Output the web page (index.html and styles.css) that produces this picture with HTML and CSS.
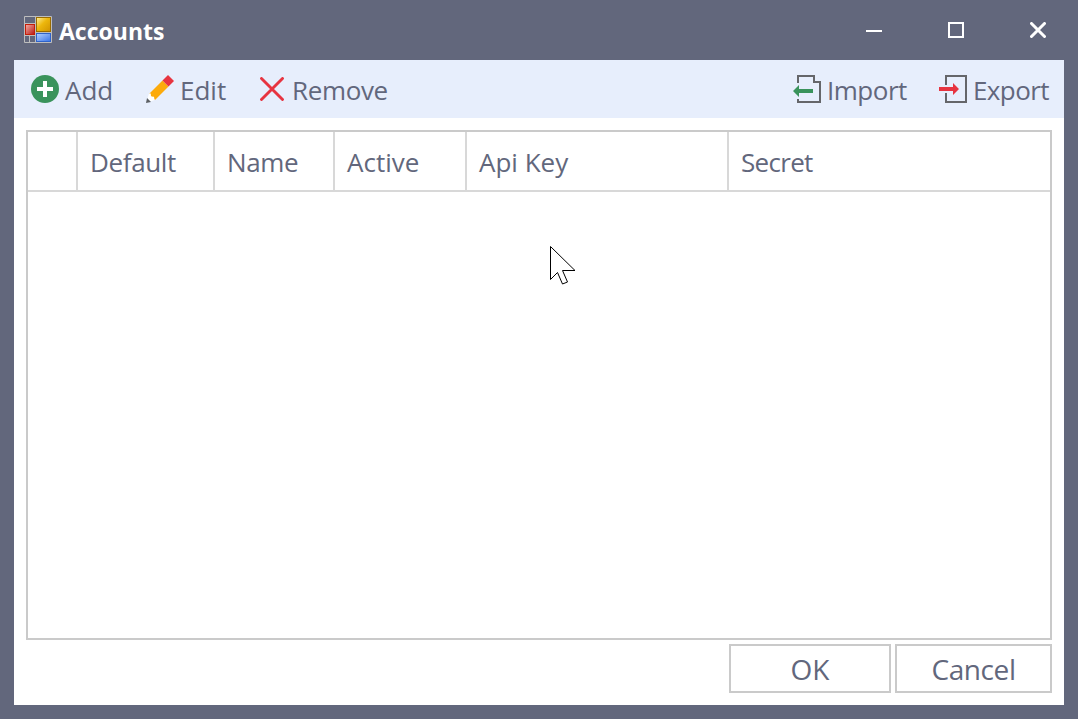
FILE: index.html
```
<!DOCTYPE html>
<html lang="en">
<head>
<meta charset="utf-8">
<title>Accounts</title>
<link rel="stylesheet" href="styles.css">
</head>
<body>
<div class="window">
  <header class="titlebar">
    <svg class="app-icon" width="28" height="27" viewBox="0 0 28 27">
      <defs>
        <linearGradient id="gold" x1="0" y1="0" x2="1" y2="1"><stop offset="0" stop-color="#fdf0a0"/><stop offset=".45" stop-color="#edb70c"/><stop offset="1" stop-color="#cf9200"/></linearGradient>
        <linearGradient id="red" x1="0" y1="0" x2="1" y2="1"><stop offset="0" stop-color="#f4b0a8"/><stop offset="1" stop-color="#b81510"/></linearGradient>
        <linearGradient id="blue" x1="0" y1="0" x2="1" y2="1"><stop offset="0" stop-color="#b4d0ff"/><stop offset="1" stop-color="#3974e8"/></linearGradient>
      </defs>
      <path d="M.5.5h27v26H.5zM11.5.5v26M.5 7.500h11M.5 19.500h11M5.500 19.500v7M11.500 16.500h16" fill="none" stroke="#bdbdbd"/>
      <rect x="12.500" y="1.500" width="14" height="14" fill="url(#gold)" stroke="#9a6c00"/>
      <rect x="1.500" y="8.500" width="9" height="10" fill="url(#red)" stroke="#c41d08"/>
      <rect x="12.500" y="17.500" width="14" height="8" fill="url(#blue)" stroke="#2f63c9"/>
    </svg>
    <h1 class="title">Accounts</h1>
    <div class="controls">
      <svg width="16" height="16"><path d="M0 9h16" stroke="#fff" stroke-width="2"/></svg>
      <svg width="16" height="16"><path d="M1 1h14v14H1z" fill="none" stroke="#fff" stroke-width="2"/></svg>
      <svg width="16" height="16"><path d="M1.500 1.500l13 13M14.500 1.500l-13 13" stroke="#fff" stroke-width="3" stroke-linecap="round"/></svg>
    </div>
  </header>
  <main class="content">
    <nav class="toolbar">
      <div class="tool add">
        <svg width="28" height="28"><circle cx="14" cy="14" r="14" fill="#3a935c"/><path d="M6 14h16M14 6v16" stroke="#fff" stroke-width="4"/></svg>
        <span>Add</span>
      </div>
      <div class="tool edit">
        <svg width="28" height="28"><path d="M16.500 5.500l6 6L9 25l-6-6z" fill="#fcaa0b"/><path d="M16.500 5.500L22 0l6 6-5.500 5.500z" fill="#e73440"/><path d="M3 18.500l1.800 0 .2 3 3 .2.500 3.300-4 1.500-3-3z" fill="#fff"/><path d="M1 23l4 4-5 1z" fill="#5d6064"/></svg>
        <span>Edit</span>
      </div>
      <div class="tool remove">
        <svg width="24" height="24"><path d="M1.500 1.500l21 21M22.500 1.500l-21 21" stroke="#e73440" stroke-width="2.900" stroke-linecap="round"/></svg>
        <span>Remove</span>
      </div>
      <div class="tool import">
        <svg width="28" height="28"><path d="M5 8V1h16v6h6v20H5v-3" fill="none" stroke="#65666a" stroke-width="2"/><path d="M0 16l6-6v4h14v4H6v4z" fill="#3a935c"/></svg>
        <span>Import</span>
      </div>
      <div class="tool export">
        <svg width="28" height="28"><path d="M7 10V1h20v26H7v-9" fill="none" stroke="#65666a" stroke-width="2"/><path d="M0 12h14V8l6 6-6 6v-4H0z" fill="#e73440"/></svg>
        <span>Export</span>
      </div>
    </nav>
    <section class="grid">
      <div class="grid-head">
        <div class="cell"></div>
        <div class="cell default"><span>Default</span></div>
        <div class="cell name"><span>Name</span></div>
        <div class="cell active"><span>Active</span></div>
        <div class="cell key"><span>Api Key</span></div>
        <div class="cell secret"><span>Secret</span></div>
      </div>
    </section>
    <footer class="actions">
      <button class="button ok"><span>OK</span></button>
      <button class="button cancel"><span>Cancel</span></button>
    </footer>
  </main>
  <svg class="cursor" width="26" height="39"><path d="M.5.500v33l7-7 5 11.500 5-2-5-11.500H25z" fill="#fff" stroke="#000"/></svg>
</div>
</body>
</html>
```
FILE: styles.css
```
* { box-sizing: border-box; }
body {
  margin: 0;
  font-family: "Open Sans", "Noto Sans", sans-serif;
  font-size: 26px;
  color: #62677c;
}
svg { display: block; flex: none; }
.window {
  position: relative;
  display: flex;
  flex-direction: column;
  width: 1078px;
  height: 719px;
  padding: 0 14px 14px;
  background: #62677c;
}
.titlebar {
  display: flex;
  align-items: center;
  flex: 0 0 60px;
  padding: 0 18px 0 10px;
}
.app-icon { margin-bottom: 1px; }
.title {
  margin: 0 0 0 7px;
  padding-top: 1px;
  font-size: 23px;
  font-weight: 700;
  line-height: 30px;
  color: #fff;
}
.controls { display: flex; gap: 66px; margin-left: auto; }
.content {
  display: flex;
  flex-direction: column;
  flex: 1;
  background: #fff;
}
.toolbar {
  display: flex;
  align-items: center;
  flex: 0 0 58px;
  padding: 0 0 0 17px;
  background: #e7eefc;
}
.tool { display: flex; align-items: center; }
.tool span { padding-top: 2px; white-space: nowrap; }
.add { width: 115px; gap: 6px; }
.edit { width: 114px; gap: 6px; }
.remove { gap: 8px; letter-spacing: -0.35px; }
.import { width: 146px; gap: 6px; margin-left: auto; letter-spacing: -0.5px; }
.export { width: 125px; gap: 6px; letter-spacing: -0.6px; }
.grid {
  flex: 0 0 510px;
  margin: 12px 12px 0;
  border: 2px solid #cacaca;
}
.grid-head {
  display: grid;
  grid-template-columns: 50px 137px 120px 132px 262px 1fr;
  height: 60px;
  border-bottom: 2px solid #d8d8d8;
}
.cell {
  display: flex;
  align-items: center;
  padding: 2px 0 0 12px;
  border-right: 2px solid #d8d8d8;
  white-space: nowrap;
}
.cell:last-child { border-right: 0; }
.default { letter-spacing: -0.35px; }
.name { letter-spacing: -0.4px; }
.secret { letter-spacing: -0.7px; }
.actions {
  display: flex;
  justify-content: flex-end;
  gap: 4px;
  padding: 4px 12px 0 0;
}
.button {
  display: flex;
  align-items: center;
  justify-content: center;
  height: 49px;
  padding: 0;
  border: 2px solid #cacaca;
  background: #fff;
  color: inherit;
  font-family: inherit;
  font-size: 28px;
}
.ok { width: 162px; }
.cancel { width: 157px; letter-spacing: -0.4px; }
.cursor { position: absolute; left: 550px; top: 246px; }
```
